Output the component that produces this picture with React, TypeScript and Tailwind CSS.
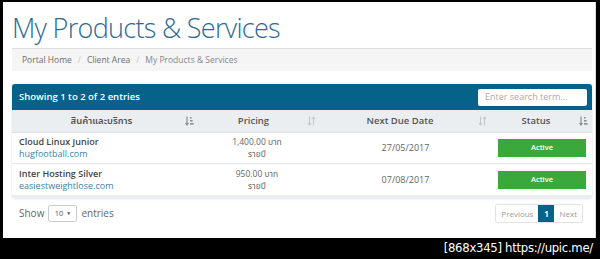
const SortIcon = ({ active = false }: { active?: boolean }) =>
  active ? (
    <svg width="9" height="10" viewBox="0 0 9 10" className="text-[#8a8f94]">
      <path d="M2 0.5v8M0.5 7l1.5 2 1.5-2" stroke="currentColor" strokeWidth="1.2" fill="none" />
      <rect x="5" y="1" width="1.6" height="1.6" fill="currentColor" />
      <rect x="5" y="4" width="2.6" height="1.6" fill="currentColor" />
      <rect x="5" y="7" width="3.6" height="1.6" fill="currentColor" />
    </svg>
  ) : (
    <svg width="9" height="10" viewBox="0 0 9 10" className="text-[#c4c9ce]">
      <path d="M2.5 0.5v8.5M1 7.2l1.5 1.8 1.5-1.8M6.5 9.5v-8.5M5 2.8l1.5-1.8 1.5 1.8" stroke="currentColor" strokeWidth="1.1" fill="none" />
    </svg>
  );

const rows = [
  { name: "Cloud Linux Junior", domain: "hugfootball.com", price: "1,400.00 บาท", due: "27/05/2017" },
  { name: "Inter Hosting Silver", domain: "easiestweightlose.com", price: "950.00 บาท", due: "07/08/2017" },
];

export default function App() {
  return (
    <div className="w-[600px] h-[259px] bg-black relative overflow-hidden" style={{ fontFamily: '"Open Sans", "Noto Sans Thai", "Noto Sans", sans-serif' }}>
      <div className="ml-[3px] mt-[2px] w-[593px] h-[236px] bg-white border-r border-[#ddd] pl-[9px] pr-[3px]">
        <h1 className="text-[27px] leading-[36px] font-light text-[#2f6a93] pt-[8px] tracking-[-0.7px]">
          My Products &amp; Services
        </h1>
        <div className="mt-[2px] h-[23px] bg-[#f5f5f5] border-t border-[#dedede] flex items-center pl-[10px] text-[8.5px] text-[#6e6e6e]">
          <span>Portal Home</span>
          <span className="mx-[6px] text-[#ccc]">/</span>
          <span>Client Area</span>
          <span className="mx-[6px] text-[#ccc]">/</span>
          <span className="text-[#888]">My Products &amp; Services</span>
        </div>

        <div className="mt-[13px] rounded-[3px] overflow-hidden shadow-[0_0_2px_rgba(0,0,0,0.15)]">
          <div className="h-[26px] bg-[#07628a] flex items-center justify-between pl-[7px] pr-[5px]">
            <span className="text-white text-[9.5px] font-semibold">Showing 1 to 2 of 2 entries</span>
            <div className="w-[109px] h-[17px] bg-white rounded-[2px] flex items-center pl-[7px] text-[9px] text-[#aaa]">
              Enter search term...
            </div>
          </div>
          <div className="flex h-[23px] bg-[#ebeef1] text-[9.5px] font-semibold text-[#555] border-b border-[#dde1e5]">
            <div className="w-[188px] flex items-center pl-[6px] pr-[6px]">
              <span className="flex-1 text-center">สินค้าและบริการ</span>
              <SortIcon active />
            </div>
            <div className="w-[122px] flex items-center pr-[6px]">
              <span className="flex-1 text-center">Pricing</span>
              <SortIcon />
            </div>
            <div className="w-[171px] flex items-center pr-[6px]">
              <span className="flex-1 text-center">Next Due Date</span>
              <SortIcon />
            </div>
            <div className="flex-1 flex items-center pr-[4px]">
              <span className="flex-1 text-center">Status</span>
              <SortIcon active />
            </div>
          </div>
          {rows.map((r, i) => (
            <div key={i} className={"flex h-[31px] bg-white " + (i === 0 ? "border-b border-[#e6e6e6]" : "")}>
              <div className="w-[188px] flex flex-col justify-center pl-[7px] leading-[12px]">
                <span className="text-[9px] font-semibold text-[#444]">{r.name}</span>
                <span className="text-[9px] text-[#3f7fa9]">{r.domain}</span>
              </div>
              <div className="w-[122px] flex flex-col justify-center items-center leading-[12px] text-[8.5px] text-[#666] pr-[8px]">
                <span>{r.price}</span>
                <span>รายปี</span>
              </div>
              <div className="w-[171px] flex items-center justify-center text-[9px] text-[#666] pr-[4px]">
                {r.due}
              </div>
              <div className="flex-1 flex items-center pl-[5px]">
                <div className="w-[88px] h-[18px] bg-[#3aa83a] flex items-center justify-center text-white text-[7.5px] font-semibold">
                  Active
                </div>
              </div>
            </div>
          ))}
          <div className="h-[4px] bg-[#ebeef1]" />
        </div>

        <div className="mt-[5px] flex items-center justify-between pl-[7px] pr-[9px]">
          <div className="flex items-center text-[10px] text-[#666]">
            <span>Show</span>
            <span className="mx-[4px] h-[17px] w-[29px] border border-[#ccc] rounded-[2px] flex items-center justify-center gap-[3px] text-[7.5px] text-[#555]">
              10 <span className="text-[5px]">▼</span>
            </span>
            <span>entries</span>
          </div>
          <div className="flex h-[19px] text-[8px] border border-[#e3e3e3] rounded-[2px]">
            <span className="px-[5px] flex items-center text-[#999]">Previous</span>
            <span className="w-[16px] flex items-center justify-center bg-[#07628a] text-white font-bold">1</span>
            <span className="px-[5px] flex items-center text-[#999]">Next</span>
          </div>
        </div>
      </div>
      <div className="absolute right-[7px] bottom-[3px] text-white text-[13px] leading-[16px] tracking-[-0.3px]" style={{ fontFamily: '"DejaVu Sans Condensed", "DejaVu Sans", sans-serif' }}>
        [868x345] https://upic.me/
      </div>
    </div>
  );
}
